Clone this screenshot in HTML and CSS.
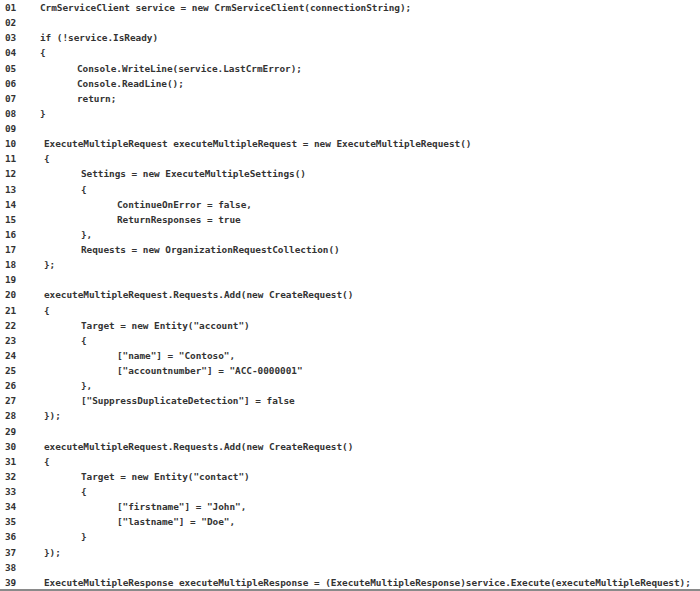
FILE: index.html
```html
<!DOCTYPE html>
<html>
<head>
<meta charset="utf-8">
<link rel="stylesheet" href="styles.css">
</head>
<body>
<div class="listing">
  <div class="row"><span class="num">01</span><span class="code">CrmServiceClient service = new CrmServiceClient(connectionString);</span></div>
  <div class="row"><span class="num">02</span><span class="code"></span></div>
  <div class="row"><span class="num">03</span><span class="code">if (!service.IsReady)</span></div>
  <div class="row"><span class="num">04</span><span class="code">{</span></div>
  <div class="row"><span class="num">05</span><span class="code ind1">Console.WriteLine(service.LastCrmError);</span></div>
  <div class="row"><span class="num">06</span><span class="code ind1">Console.ReadLine();</span></div>
  <div class="row"><span class="num">07</span><span class="code ind1">return;</span></div>
  <div class="row"><span class="num">08</span><span class="code">}</span></div>
  <div class="row"><span class="num">09</span><span class="code"></span></div>
  <div class="row late"><span class="num">10</span><span class="code">ExecuteMultipleRequest executeMultipleRequest = new ExecuteMultipleRequest()</span></div>
  <div class="row late"><span class="num">11</span><span class="code">{</span></div>
  <div class="row late"><span class="num">12</span><span class="code ind1">Settings = new ExecuteMultipleSettings()</span></div>
  <div class="row late"><span class="num">13</span><span class="code ind1">{</span></div>
  <div class="row late"><span class="num">14</span><span class="code ind2">ContinueOnError = false,</span></div>
  <div class="row late"><span class="num">15</span><span class="code ind2">ReturnResponses = true</span></div>
  <div class="row late"><span class="num">16</span><span class="code ind1">},</span></div>
  <div class="row late"><span class="num">17</span><span class="code ind1">Requests = new OrganizationRequestCollection()</span></div>
  <div class="row late"><span class="num">18</span><span class="code">};</span></div>
  <div class="row late"><span class="num">19</span><span class="code"></span></div>
  <div class="row late"><span class="num">20</span><span class="code">executeMultipleRequest.Requests.Add(new CreateRequest()</span></div>
  <div class="row late"><span class="num">21</span><span class="code">{</span></div>
  <div class="row late"><span class="num">22</span><span class="code ind1">Target = new Entity("account")</span></div>
  <div class="row late"><span class="num">23</span><span class="code ind1">{</span></div>
  <div class="row late"><span class="num">24</span><span class="code ind2">["name"] = "Contoso",</span></div>
  <div class="row late"><span class="num">25</span><span class="code ind2">["accountnumber"] = "ACC-0000001"</span></div>
  <div class="row late"><span class="num">26</span><span class="code ind1">},</span></div>
  <div class="row late"><span class="num">27</span><span class="code ind1">["SuppressDuplicateDetection"] = false</span></div>
  <div class="row late"><span class="num">28</span><span class="code">});</span></div>
  <div class="row late"><span class="num">29</span><span class="code"></span></div>
  <div class="row late"><span class="num">30</span><span class="code">executeMultipleRequest.Requests.Add(new CreateRequest()</span></div>
  <div class="row late"><span class="num">31</span><span class="code">{</span></div>
  <div class="row late"><span class="num">32</span><span class="code ind1">Target = new Entity("contact")</span></div>
  <div class="row late"><span class="num">33</span><span class="code ind1">{</span></div>
  <div class="row late"><span class="num">34</span><span class="code ind2">["firstname"] = "John",</span></div>
  <div class="row late"><span class="num">35</span><span class="code ind2">["lastname"] = "Doe",</span></div>
  <div class="row late"><span class="num">36</span><span class="code ind1">}</span></div>
  <div class="row late"><span class="num">37</span><span class="code">});</span></div>
  <div class="row late"><span class="num">38</span><span class="code"></span></div>
  <div class="row late"><span class="num">39</span><span class="code">ExecuteMultipleResponse executeMultipleResponse = (ExecuteMultipleResponse)service.Execute(executeMultipleRequest);</span></div>
</div>
</body>
</html>
```

FILE: styles.css
```css
html, body {
  margin: 0;
  padding: 0;
  background: #ffffff;
}

.listing {
  width: 700px;
  height: 589px;
  border-bottom: 2px solid #8a8a8a;
  box-sizing: content-box;
  font-family: "DejaVu Sans Mono", "Liberation Mono", monospace;
  font-size: 9.4px;
  font-weight: bold;
  letter-spacing: -0.02px;
  color: #333333;
  display: flex;
  flex-direction: column;
}

.row {
  display: flex;
  height: 15.13px;
  line-height: 15.13px;
  white-space: pre;
}

.num {
  width: 40px;
  padding-left: 5px;
  box-sizing: border-box;
  flex: none;
}

.code {
  flex: none;
}

.row.late .code {
  padding-left: 4px;
}

.row .code.ind1 {
  padding-left: 37px;
}

.row.late .code.ind1 {
  padding-left: 41px;
}

.row .code.ind2,
.row.late .code.ind2 {
  padding-left: 77px;
}
```
